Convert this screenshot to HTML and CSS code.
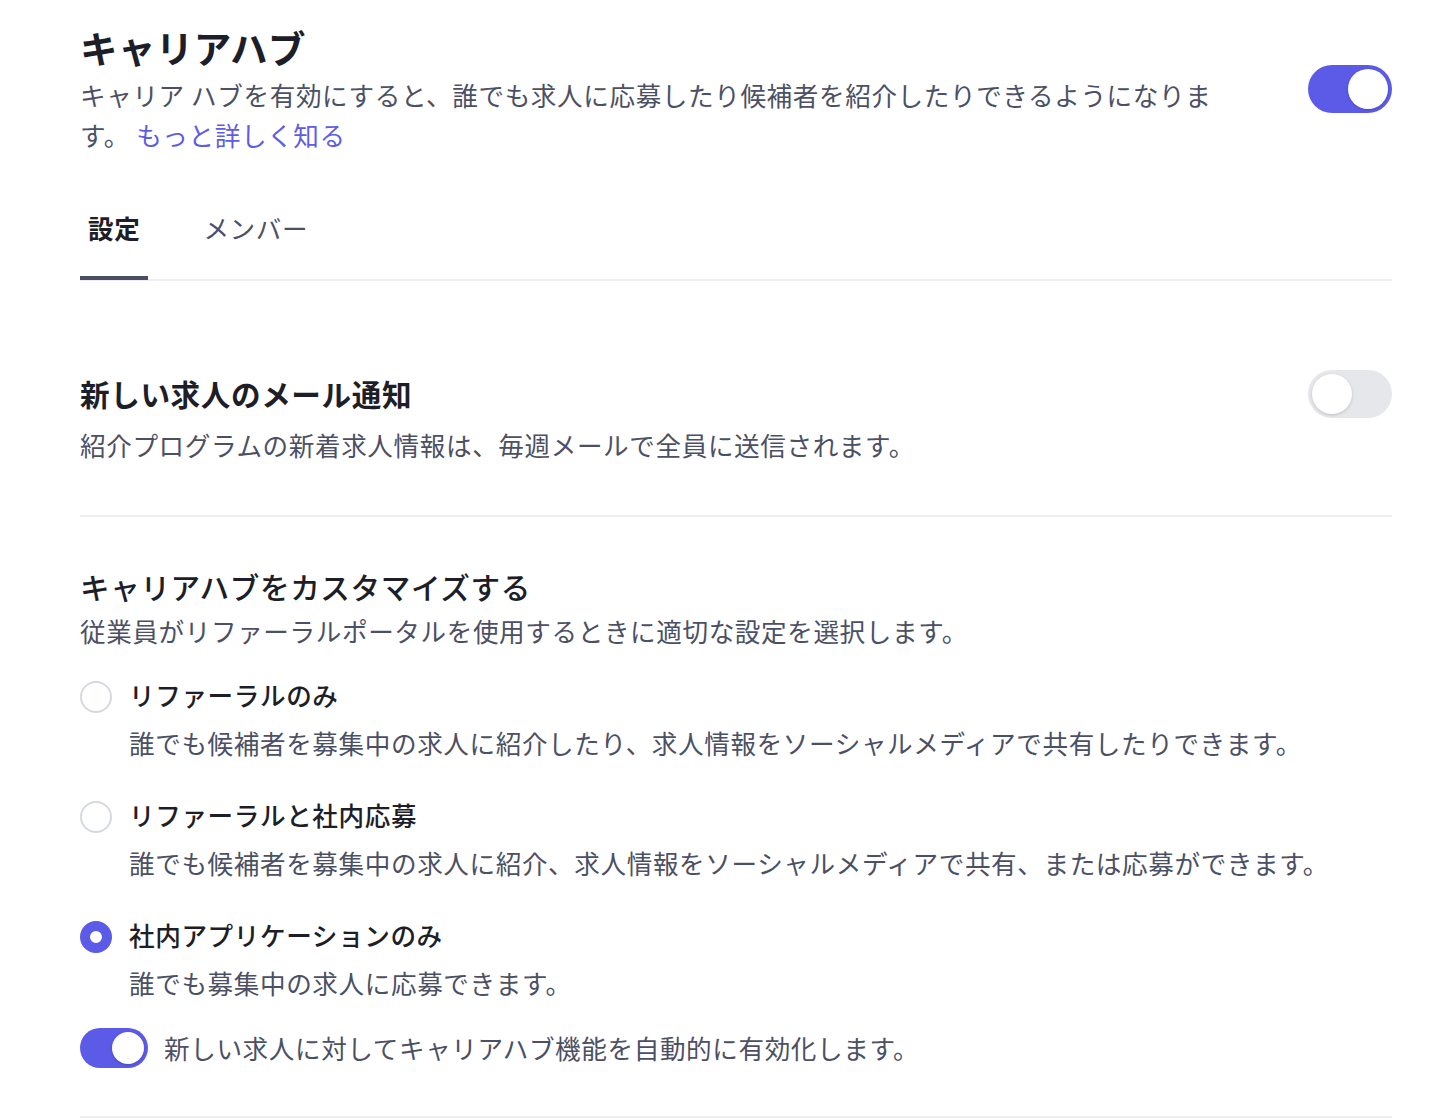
FILE: index.html
```html
<!DOCTYPE html>
<html lang="ja">
<head>
  <meta charset="UTF-8" />
  <meta name="viewport" content="width=device-width, initial-scale=1.0"/>
  <title>キャリアハブ</title>
  <link rel="stylesheet" href="styles.css">
</head>
<body>

<div class="page">

  <div class="hub-header">
    <div class="hub-text">
      <h1 class="hub-title">キャリアハブ</h1>
      <p class="hub-desc">キャリア ハブを有効にすると、誰でも求人に応募したり候補者を紹介したりできるようになります。 <a href="#" class="link">もっと詳しく知る</a></p>
    </div>
    <span class="toggle on"><span class="knob"></span></span>
  </div>

  <div class="tabs">
    <div class="tab active">設定</div>
    <div class="tab">メンバー</div>
  </div>

  <div class="section">
    <div class="section-head">
      <h2 class="section-title bold">新しい求人のメール通知</h2>
      <span class="toggle"><span class="knob"></span></span>
    </div>
    <p class="section-desc spaced">紹介プログラムの新着求人情報は、毎週メールで全員に送信されます。</p>
  </div>

  <div class="section custom">
    <h2 class="section-title">キャリアハブをカスタマイズする</h2>
    <p class="section-desc">従業員がリファーラルポータルを使用するときに適切な設定を選択します。</p>

    <div class="option">
      <div class="option-row">
        <span class="radio"></span>
        <span class="option-label">リファーラルのみ</span>
      </div>
      <p class="option-desc">誰でも候補者を募集中の求人に紹介したり、求人情報をソーシャルメディアで共有したりできます。</p>
    </div>

    <div class="option">
      <div class="option-row">
        <span class="radio"></span>
        <span class="option-label">リファーラルと社内応募</span>
      </div>
      <p class="option-desc">誰でも候補者を募集中の求人に紹介、求人情報をソーシャルメディアで共有、または応募ができます。</p>
    </div>

    <div class="option">
      <div class="option-row">
        <span class="radio checked"></span>
        <span class="option-label">社内アプリケーションのみ</span>
      </div>
      <p class="option-desc">誰でも募集中の求人に応募できます。</p>
    </div>

    <div class="auto-row">
      <span class="toggle small on"><span class="knob"></span></span>
      <span class="auto-label">新しい求人に対してキャリアハブ機能を自動的に有効化します。</span>
    </div>
  </div>

</div>

</body>
</html>
```

FILE: styles.css
```css
body {
  margin: 0;
  background-color: #ffffff;
  font-family: "Noto Sans CJK JP", "Noto Sans", sans-serif;
  color: #4b5064;
  letter-spacing: 0.6px;
}

.page {
  width: 1312px;
  margin-left: 80px;
  padding-top: 23px;
}

.hub-header {
  display: flex;
  justify-content: space-between;
  align-items: center;
}

.hub-text {
  max-width: 1150px;
}

.hub-title {
  margin: 0;
  font-size: 37.5px;
  line-height: 48px;
  font-weight: 700;
  color: #1d1e27;
  letter-spacing: 0.4px;
}

.hub-desc {
  margin: 4px 0 0;
  font-size: 25.6px;
  line-height: 40px;
}

.link {
  color: #5e5ce6;
  text-decoration: none;
}

/* toggles */
.toggle {
  display: flex;
  align-items: center;
  flex-shrink: 0;
  box-sizing: border-box;
  width: 84px;
  height: 48px;
  padding: 4px;
  border-radius: 24px;
  background-color: #e5e7eb;
}

.toggle .knob {
  width: 40px;
  height: 40px;
  border-radius: 50%;
  background-color: #ffffff;
  box-shadow: 0 1px 3px rgba(0, 0, 0, 0.18);
}

.toggle.on {
  background-color: #5b5be8;
  justify-content: flex-end;
}

.toggle.small {
  width: 68px;
  height: 40px;
  border-radius: 20px;
}

.toggle.small .knob {
  width: 32px;
  height: 32px;
}

/* tabs */
.tabs {
  display: flex;
  gap: 47px;
  margin-top: 53px;
  border-bottom: 2px solid #eeeef2;
}

.tab {
  padding: 0 8px 28px;
  font-size: 25.6px;
  line-height: 40px;
  color: #4b5064;
  border-bottom: 4px solid transparent;
  margin-bottom: -1px;
}

.tab.active {
  font-weight: 700;
  color: #1d1e27;
  border-bottom-color: #4a4f63;
}

/* sections */
.section {
  padding: 89px 0 50px;
  border-bottom: 2px solid #eeeef2;
}

.section.custom {
  padding: 50px 0 48px;
}

.section-head {
  display: flex;
  justify-content: space-between;
  align-items: center;
}

.section-title {
  margin: 0;
  font-size: 29.6px;
  line-height: 40px;
  font-weight: 500;
  color: #1d1e27;
}

.section-title.bold {
  font-weight: 700;
}

.section-desc {
  margin: 4px 0 0;
  font-size: 25.6px;
  line-height: 40px;
}

.section-desc.spaced {
  margin-top: 7px;
}

/* radio options */
.option {
  margin-top: 32px;
}

.section-desc + .option {
  margin-top: 24px;
}

.option-row {
  display: flex;
  align-items: center;
  gap: 17px;
}

.radio {
  box-sizing: border-box;
  width: 32px;
  height: 32px;
  margin-top: 3px;
  border: 2px solid #d5d9df;
  border-radius: 50%;
  background-color: #ffffff;
}

.radio.checked {
  border: 10px solid #5b5be8;
}

.option-label {
  font-size: 25.6px;
  line-height: 40px;
  font-weight: 500;
  color: #1d1e27;
}

.option-desc {
  margin: 8px 0 0;
  padding-left: 49px;
  font-size: 25.6px;
  line-height: 40px;
}

.auto-row {
  display: flex;
  align-items: center;
  gap: 16px;
  margin-top: 25px;
}

.auto-label {
  font-size: 25.6px;
  line-height: 40px;
}
```
